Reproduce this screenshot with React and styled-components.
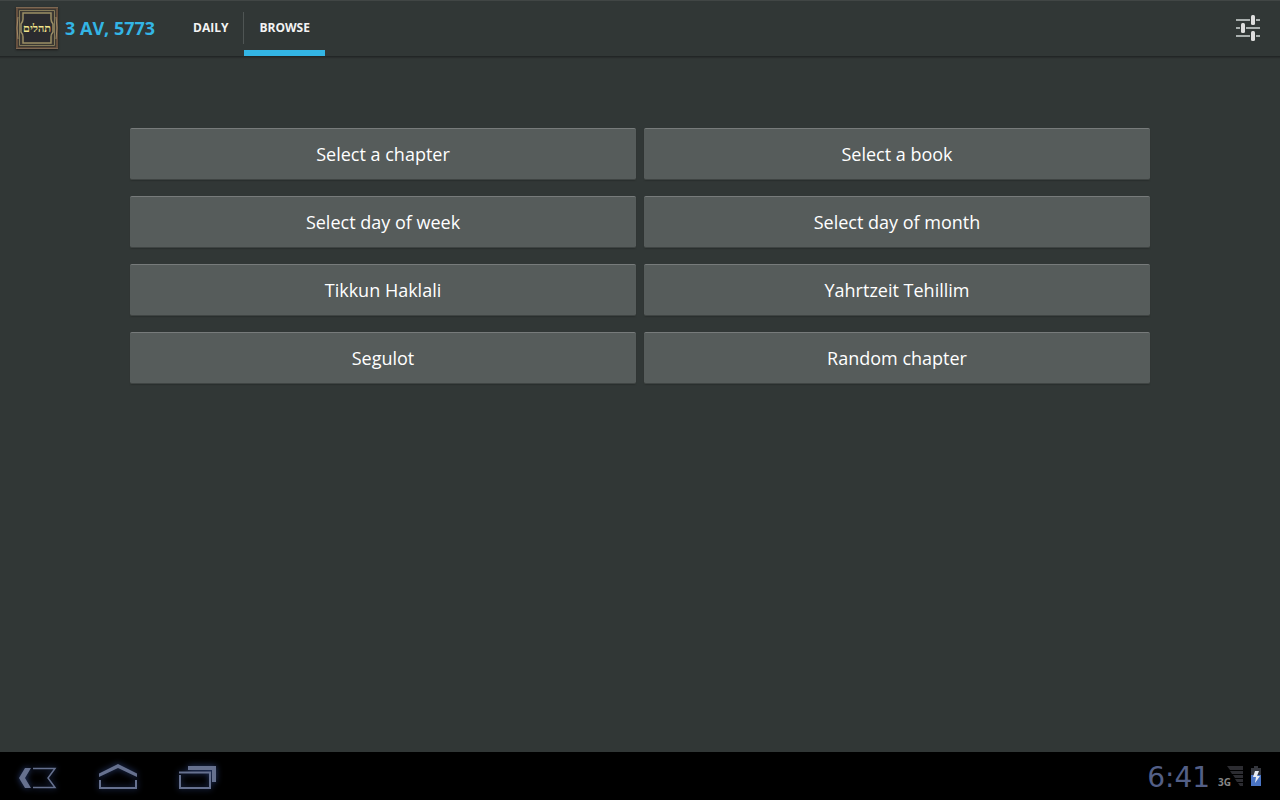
//IMPORTS
import React, { useState } from 'react'
import styled, { createGlobalStyle } from 'styled-components'


//STYLE
const colors = {
  bg: '#313736',
  blue: '#33b5e5',
  btn: '#565c5b',
  light: '#f3f3f3',
  sysBlue: '#66718f',
}
const fonts = {
  ui: '"Open Sans", "Noto Sans", sans-serif',
  clock: '"DejaVu Sans", sans-serif',
  hebrew: '"Liberation Serif", "DejaVu Sans", serif',
}

const GlobalStyle = createGlobalStyle`
  * {
    box-sizing: border-box;
  }
  body {
    margin: 0;
    background: ${colors.bg};
    font-family: ${fonts.ui};
  }
  button {
    margin: 0;
    border: 0;
    padding: 0;
    background: none;
    font-family: inherit;
    cursor: pointer;
  }
  svg {
    display: block;
  }
`
const Screen = styled.div`
  display: flex;
  flex-direction: column;
  min-height: 100vh;
`

//-Action bar
const ActionBar = styled.header`
  display: flex;
  align-items: center;
  height: 57px;
  padding: 0 16px;
  border-bottom: 1px solid #222626;
  box-shadow: inset 0 1px 0 #414645, 0 1px 1px #292d2d;
`
const Logo = styled.div`
  display: grid;
  place-items: center;
  width: 42px;
  height: 42px;
  margin-right: 7px;
  box-shadow: 0 1px 2px #1a1a1a;
  > * {
    grid-area: 1 / 1;
  }
  span {
    font-family: ${fonts.hebrew};
    font-weight: 700;
    font-size: 11px;
    line-height: 16px;
    color: #f4e58c;
  }
`
const Title = styled.h1`
  margin: 0 23px 0 0;
  font-weight: 700;
  font-size: 18px;
  line-height: 24px;
  white-space: nowrap;
  color: ${colors.blue};
`
const Tabs = styled.nav`
  display: flex;
  align-items: center;
  align-self: stretch;
  flex: 1;
`
const Divider = styled.div`
  width: 1px;
  height: 32px;
  background: #4f5554;
`
const Tab = styled.button`
  height: 100%;
  padding: 6px 15px 0;
  border-bottom: 6px solid ${({ $active }) => ($active ? colors.blue : 'transparent')};
  font-weight: 700;
  font-size: 12px;
  line-height: 16px;
  color: ${colors.light};
`
const IconButton = styled.button`
  padding: 0 4px;
`

//-Browse page
const Main = styled.main`
  flex: 1;
  padding: 71px 16px;
`
const ButtonGrid = styled.div`
  display: grid;
  grid-template-columns: 1fr 1fr;
  gap: 16px 8px;
  max-width: 1020px;
  margin: 0 auto;
`
const BrowseButton = styled.button`
  height: 52px;
  border-top: 1px solid #777b7b;
  border-bottom: 1px solid #3f4443;
  border-radius: 2px;
  background: ${colors.btn};
  box-shadow: 0 1px 1px #2a2f2e;
  font-size: 18px;
  line-height: 24px;
  color: #fff;
`

//-System bar
const SystemBar = styled.footer`
  display: flex;
  justify-content: space-between;
  align-items: center;
  height: 48px;
  padding: 0 14px 0 8px;
  background: #000;
`
const NavKeys = styled.div`
  display: flex;
  gap: 20px;
`
const NavKey = styled.button`
  width: 60px;
  height: 48px;
  svg {
    filter: drop-shadow(0 0 3px #2a3f75);
  }
`
const Status = styled.div`
  display: flex;
  align-items: center;
`
const Clock = styled.time`
  margin-right: 8px;
  padding-top: 4px;
  font-family: ${fonts.clock};
  font-size: 28px;
  line-height: 32px;
  color: #535f86;
`
/* the label tucks under the slanted edge of the signal bars */
const Network = styled.span`
  margin-right: -4px;
  padding-top: 12px;
  font-weight: 700;
  font-size: 10px;
  line-height: 12px;
  color: #868686;
`
const Indicators = styled.div`
  display: flex;
  align-items: center;
  gap: 3px;
`


//COMPONENTS
const LogoFrame = () => (
  <svg width="42" height="42" viewBox="0 0 42 42" fill="none" aria-hidden="true">
    <rect width="42" height="42" fill="#5c493a" />
    <rect x="2" y="2" width="38" height="38" fill="#3b3833" />
    <path d="M0 .5h42M0 41.5h42" stroke="#7d6853" />
    <path d="M1 1v40M41 1v40" stroke="#66503e" strokeWidth="2" />
    <path d="M3.5 3.5h35v35h-35z" stroke="#857a58" />
    <path d="M7 6h28v6q0 3 2 5v8q-2 2-2 5v6H7v-6q0-3-2-5v-8q2-2 2-5z" fill="#2b2b2f" stroke="#9c8f66" strokeWidth="1.5" />
    <path d="M2 10q-2 11 0 22M40 10q2 11 0 22" stroke="#a08b68" />
  </svg>
)

const SlidersIcon = () => (
  <svg width="24" height="28" viewBox="0 0 24 28" aria-hidden="true">
    <path d="M0 6h14M20 6h4M0 14h4M10 14h14M0 22h14M20 22h4" stroke="#a9afae" strokeWidth="2" />
    <rect x="15" y="1" width="4" height="10" rx="1.5" fill="#dedede" />
    <rect x="5" y="9" width="4" height="10" rx="1.5" fill="#dedede" />
    <rect x="15" y="17" width="4" height="10" rx="1.5" fill="#dedede" />
  </svg>
)

const BackIcon = () => (
  <svg width="60" height="48" viewBox="0 0 60 48" fill="none" aria-hidden="true">
    <path d="M17 16h6l-6 10 6 10h-6l-6-10z" fill={colors.sysBlue} />
    <path d="M25 16.5h22l-7 9.5 7 9.5H25" stroke={colors.sysBlue} strokeWidth="1.5" />
  </svg>
)

const HomeIcon = () => (
  <svg width="60" height="48" viewBox="0 0 60 48" fill="none" aria-hidden="true">
    <path d="M11 21.5 30 12l19 9.5V25l-19-9-19 9z" fill={colors.sysBlue} />
    <path d="M12 28v8h36v-8" stroke={colors.sysBlue} strokeWidth="2" />
  </svg>
)

const RecentIcon = () => (
  <svg width="60" height="48" viewBox="0 0 60 48" fill="none" aria-hidden="true">
    <path d="M20 14h28v16h-4V18H20z" fill={colors.sysBlue} />
    <path d="M11 20.5h31V36H12V23" stroke={colors.sysBlue} strokeWidth="2" />
  </svg>
)

const SignalIcon = () => (
  <svg width="16" height="20" viewBox="0 0 16 20" aria-hidden="true">
    <path d="M0 0h16v4H3zM3 5h13v3H5zM6 9h10v3H8zM8 13h8v3h-6zM11 17h5v3h-3z" fill="#2c2c31" />
  </svg>
)

const BatteryIcon = () => (
  <svg width="20" height="24" viewBox="0 0 20 24" aria-hidden="true">
    <path d="M8 2h4v2h3v7H5V4h3z" fill="#34363d" />
    <path d="M5 11h10v11H5z" fill="#4a74c4" />
    <path d="M9 7h4l-2 5h3l-5 7 1-6H7z" fill="#e7ebf2" />
  </svg>
)


//-Data
const tabs = ['DAILY', 'BROWSE']
const browseOptions = [
  'Select a chapter',
  'Select a book',
  'Select day of week',
  'Select day of month',
  'Tikkun Haklali',
  'Yahrtzeit Tehillim',
  'Segulot',
  'Random chapter',
]


//MAIN COMPONENT
function App() {
  const [activeTab, setActiveTab] = useState('BROWSE')

  return (
    <Screen>
      <GlobalStyle />
      <ActionBar>
        <Logo>
          <LogoFrame />
          <span lang="he" dir="rtl">תהלים</span>
        </Logo>
        <Title>3 AV, 5773</Title>
        <Tabs>
          {tabs.map((tab, i) => (
            <React.Fragment key={tab}>
              {i > 0 && <Divider />}
              <Tab $active={tab === activeTab} onClick={() => setActiveTab(tab)}>{tab}</Tab>
            </React.Fragment>
          ))}
        </Tabs>
        <IconButton aria-label="Settings"><SlidersIcon /></IconButton>
      </ActionBar>
      <Main>
        <ButtonGrid>
          {browseOptions.map((option) => (
            <BrowseButton key={option}>{option}</BrowseButton>
          ))}
        </ButtonGrid>
      </Main>
      <SystemBar>
        <NavKeys>
          <NavKey aria-label="Back"><BackIcon /></NavKey>
          <NavKey aria-label="Home"><HomeIcon /></NavKey>
          <NavKey aria-label="Recent apps"><RecentIcon /></NavKey>
        </NavKeys>
        <Status>
          <Clock>6:41</Clock>
          <Network>3G</Network>
          <Indicators>
            <SignalIcon />
            <BatteryIcon />
          </Indicators>
        </Status>
      </SystemBar>
    </Screen>
  )
}
export default App
